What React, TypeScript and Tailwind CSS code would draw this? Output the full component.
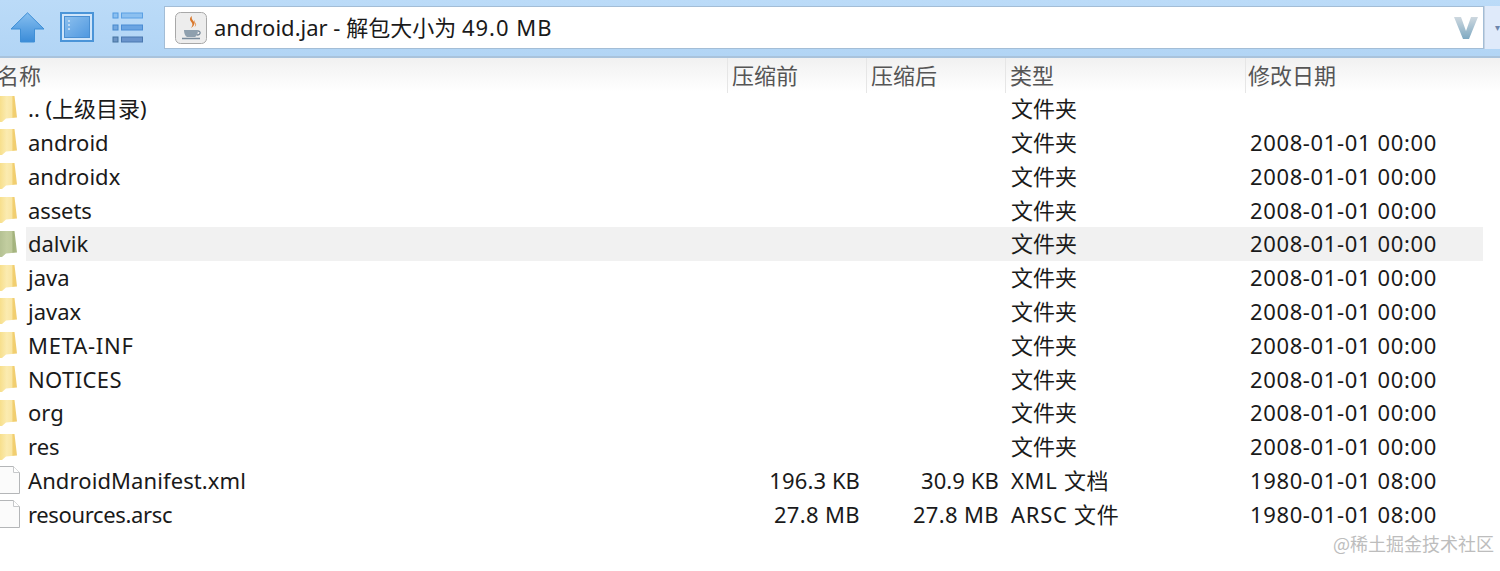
import React from 'react';

const font = '"Noto Sans", "Noto Sans CJK SC", sans-serif';

type Row = { name: string; before?: string; after?: string; type: string; date?: string; file?: boolean; active?: boolean; track?: string };

const folderDate = '2008-01-01 00:00';
const fileDate = '1980-01-01 08:00';

const rows: Row[] = [
  { name: '.. (上级目录)', type: '文件夹' },
  { name: 'android', type: '文件夹', date: folderDate },
  { name: 'androidx', type: '文件夹', date: folderDate },
  { name: 'assets', type: '文件夹', date: folderDate, track: 'tracking-[-0.1px]' },
  { name: 'dalvik', type: '文件夹', date: folderDate, active: true },
  { name: 'java', type: '文件夹', date: folderDate },
  { name: 'javax', type: '文件夹', date: folderDate },
  { name: 'META-INF', type: '文件夹', date: folderDate, track: 'tracking-[0.75px]' },
  { name: 'NOTICES', type: '文件夹', date: folderDate, track: 'tracking-[0.4px]' },
  { name: 'org', type: '文件夹', date: folderDate },
  { name: 'res', type: '文件夹', date: folderDate },
  { name: 'AndroidManifest.xml', before: '196.3 KB', after: '30.9 KB', type: 'XML 文档', date: fileDate, file: true, track: 'tracking-[0.1px]' },
  { name: 'resources.arsc', before: '27.8 MB', after: '27.8 MB', type: 'ARSC 文件', date: fileDate, file: true, track: 'tracking-[-0.35px]' },
];

function FolderIcon({ active }: { active?: boolean }) {
  const id = active ? 'folderActive' : 'folderPlain';
  return (
    <svg width="18" height="28" viewBox="0 0 18 28" className="shrink-0">
      <defs>
        <linearGradient id={id} x1="0" y1="0" x2="1" y2="0">
          <stop offset="0" stopColor={active ? '#b4c192' : '#f7df8c'} />
          <stop offset="0.4" stopColor={active ? '#c2cda0' : '#fbebb0'} />
          <stop offset="0.7" stopColor={active ? '#bdc99a' : '#f9e6a4'} />
          <stop offset="0.76" stopColor={active ? '#a3b27c' : '#f2cf70'} />
          <stop offset="1" stopColor={active ? '#a9b784' : '#f0cd70'} />
        </linearGradient>
      </defs>
      <path d="M0 1h14.500L17 22.500 6 23.500 2 27H0z" fill={`url(#${id})`} />
    </svg>
  );
}

function FileIcon() {
  return (
    <svg width="20" height="29" viewBox="0 0 20 29" className="shrink-0">
      <path d="M-1 .5h14.500l6 6V27.500H-1z" fill="#fbfbfb" stroke="#b4b6b8" />
      <path d="M13.500 .5v6h6" fill="#fff" stroke="#c6c8ca" />
    </svg>
  );
}

function UpArrow() {
  return (
    <svg width="35" height="31" viewBox="0 0 35 31">
      <defs>
        <linearGradient id="upArrow" x1="0" y1="0" x2="0" y2="1">
          <stop offset="0" stopColor="#86bff0" />
          <stop offset="1" stopColor="#3b8cd8" />
        </linearGradient>
      </defs>
      <path d="M17.500 .8 34 17H24.500V30H10.500V17H1z" fill="url(#upArrow)" stroke="#3f8fd6" strokeWidth="1" />
    </svg>
  );
}

function PanelIcon() {
  return (
    <svg width="34" height="30" viewBox="0 0 34 30">
      <defs>
        <linearGradient id="panelFill" x1="0" y1="0" x2="1" y2="1">
          <stop offset="0" stopColor="#8dc0ee" />
          <stop offset="1" stopColor="#4f98e0" />
        </linearGradient>
      </defs>
      <rect x="1" y="1" width="32" height="28" fill="#cfe5fa" stroke="#4a94d8" strokeWidth="2" />
      <rect x="4.500" y="4.500" width="25" height="21" fill="url(#panelFill)" stroke="#4a8fd2" />
      <path d="M8 9h2M8 13h2M8 17h2" stroke="#cfe4f8" strokeWidth="1.500" />
    </svg>
  );
}

function ListIcon() {
  return (
    <svg width="31" height="31" viewBox="0 0 31 31">
      <rect x="1" y="1" width="5" height="5" fill="#8cc0f0" stroke="#4f98e0" />
      <rect x="9.500" y="1" width="21" height="5" fill="#8cc0f0" stroke="#5aa0e4" />
      <rect x="1" y="13" width="5" height="5" fill="#74a8e0" stroke="#4688cc" />
      <rect x="9.500" y="13" width="21" height="5" fill="#6aa4e2" stroke="#4a8cd4" />
      <rect x="1" y="25" width="5" height="5" fill="#6c94c4" stroke="#44739f" />
      <rect x="9.500" y="25" width="21" height="5" fill="#6a94cc" stroke="#4a78b0" />
    </svg>
  );
}

function JarIcon() {
  return (
    <svg width="32" height="32" viewBox="0 0 32 32">
      <rect x="0.500" y="0.500" width="31" height="31" rx="5" fill="#ededed" stroke="#a8a8a8" />
      <path d="M17 4c-4 3-1 5 0 7 1 2 0 3-1 5 3-2 4-4 3-6s-3-3-2-6z" fill="#d9782c" />
      <path d="M20 8c-2 1-1 3 0 4 .5 1 0 2-.5 3 2-1 2-3 1-4s-1-2-.5-3z" fill="#e59a5c" />
      <path d="M9 18h14c0 3-1 6-3 7h-8c-2-1-3-4-3-7z" fill="#8fa0ae" />
      <path d="M23 19c3 0 3 4-1 4M7 26.500h18" fill="none" stroke="#7a8c9c" strokeWidth="1.300" />
    </svg>
  );
}

export default function App() {
  return (
    <div className="w-[1500px] h-[571px] overflow-hidden bg-white text-[22px] text-[#1a1a1a]" style={{ fontFamily: font }}>
      {/* toolbar */}
      <div className="h-[58px] flex items-start pt-[6px] bg-gradient-to-b from-[#bbdbf8] to-[#b2d5f5] border-b-2 border-[#a9c3dc]">
        <div className="w-[164px] flex items-start shrink-0 pl-[10px] pt-[6px]">
          <UpArrow />
          <div className="ml-[15px]"><PanelIcon /></div>
          <div className="ml-[18px]"><ListIcon /></div>
        </div>
        <div className="w-[1320px] h-[43px] flex items-center bg-white border border-[#a3bdd6] pl-[10px] pr-[4px]">
          <JarIcon />
          <span className="ml-[7px] -mt-[2px] whitespace-nowrap leading-none">
            android.jar - 解包大小为 <span className="tracking-[1px]">49.0 MB</span>
          </span>
          <svg width="26" height="24" viewBox="0 0 26 24" className="ml-auto">
            <defs>
              <linearGradient id="chevV" x1="0" y1="0" x2="0" y2="1">
                <stop offset="0" stopColor="#ced8df" />
                <stop offset="1" stopColor="#7ea9c2" />
              </linearGradient>
            </defs>
            <path d="M1 1h7l5 14 5-14h7l-9 22H10z" fill="url(#chevV)" />
          </svg>
        </div>
        <div className="flex-1 h-[43px] bg-[#dfeafa] border-l border-[#c4d2e2] flex items-center justify-end text-[#6d85ab] text-[10px]">▾</div>
      </div>

      {/* column header */}
      <div className="h-[33.800px] grid grid-cols-[727px_139px_139px_240px_238px] bg-gradient-to-b from-[#f1f1f1] to-white text-[#555555] leading-[35px]">
        <div className="-ml-[3px]">名称</div>
        <div className="pl-[4px] border-l border-[#e6e6e6]">压缩前</div>
        <div className="pl-[4px] border-l border-[#e6e6e6]">压缩后</div>
        <div className="pl-[4px] border-l border-[#e6e6e6]">类型</div>
        <div className="pl-[2px] border-l border-[#e6e6e6]">修改日期</div>
      </div>

      {/* rows */}
      <div>
        {rows.map((row) => {
          const bg = row.active ? 'bg-[#f1f1f1]' : '';
          const sizeTrack = row.before?.startsWith('27') ? 'tracking-[0.35px]' : 'tracking-[0.1px]';
          return (
            <div key={row.name} className="h-[33.800px] grid grid-cols-[727px_139px_139px_240px_238px] items-center">
              <div className="h-full flex items-center">
                {row.file ? <FileIcon /> : <FolderIcon active={row.active} />}
                <span className={`h-full flex items-center flex-1 whitespace-nowrap ${row.file ? 'ml-[6px] pl-[2px]' : 'ml-[8px] pl-[2px]'} ${bg} ${row.track ?? ''}`}>{row.name}</span>
              </div>
              <div className={`h-full flex items-center justify-end pr-[6px] ${sizeTrack} ${bg}`}>{row.before}</div>
              <div className={`h-full flex items-center justify-end pr-[6px] ${sizeTrack} ${bg}`}>{row.after}</div>
              <div className={`h-full flex items-center pl-[6px] ${row.file ? 'tracking-[0.7px]' : ''} ${bg}`}>{row.type}</div>
              <div className={`h-full flex items-center pl-[5px] tracking-[0.63px] ${bg}`}>{row.date}</div>
            </div>
          );
        })}
      </div>

      {/* watermark */}
      <div className="flex justify-end pr-[6px] text-[18px] text-[#bdbdbd] leading-[24px]" style={{ fontFamily: '"Noto Sans CJK SC", serif' }}>
        @稀土掘金技术社区
      </div>
    </div>
  );
}
